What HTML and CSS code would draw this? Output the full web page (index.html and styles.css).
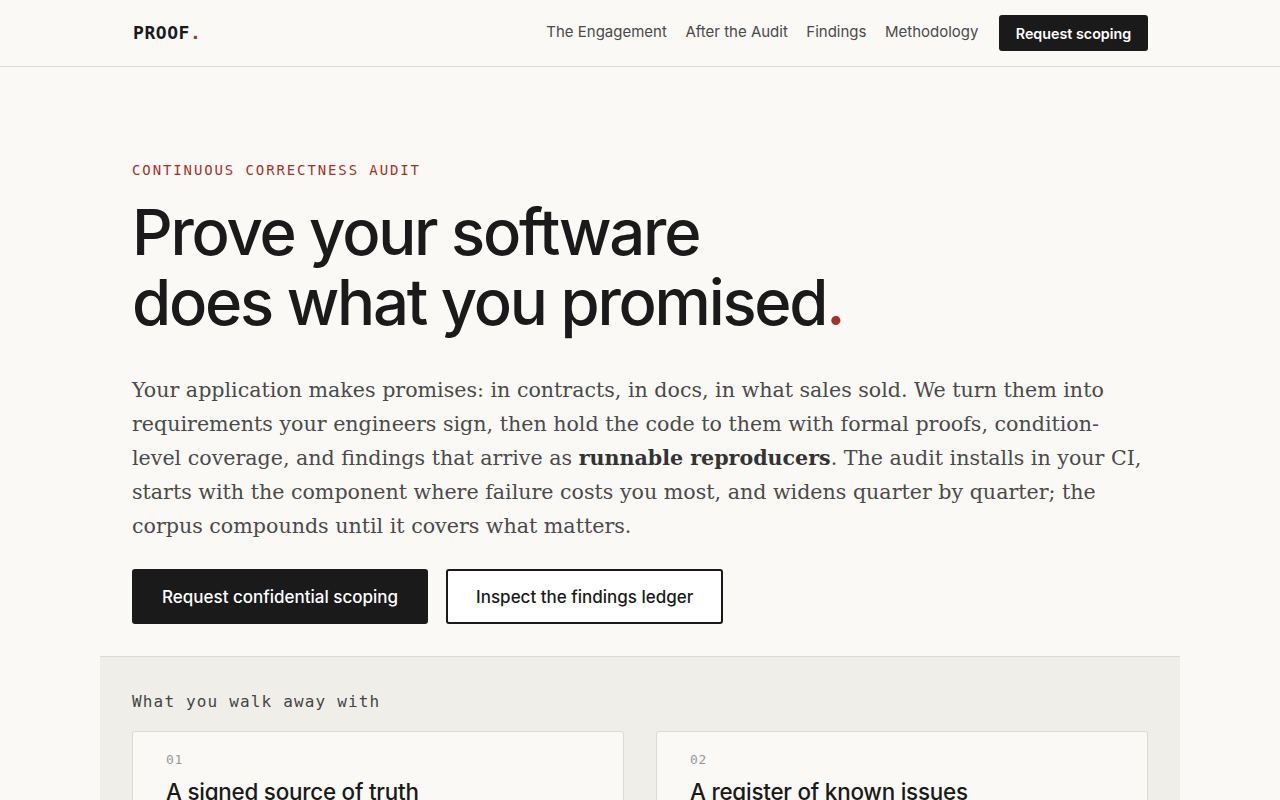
FILE: index.html
```html
<!DOCTYPE html>
<html lang="en">
<head>
<meta charset="utf-8">
<title>PROOF.</title>
<link rel="stylesheet" href="styles.css">
</head>
<body>
<header class="site-header">
  <div class="wrap header-inner">
    <a class="logo" href="#">PROOF<span class="dot">.</span></a>
    <nav class="nav">
      <a class="nav-link" href="#">The Engagement</a>
      <a class="nav-link" href="#">After the Audit</a>
      <a class="nav-link" href="#">Findings</a>
      <a class="nav-link" href="#">Methodology</a>
      <a class="nav-cta" href="#">Request scoping</a>
    </nav>
  </div>
</header>
<main>
  <section class="wrap hero">
    <p class="eyebrow">CONTINUOUS CORRECTNESS AUDIT</p>
    <h1 class="title">Prove your software<br>does what you promised<span class="dot">.</span></h1>
    <p class="lede">Your application makes promises: in contracts, in docs, in what sales sold. We turn them into requirements your engineers sign, then hold the code to them with formal proofs, condition-level coverage, and findings that arrive as <strong>runnable reproducers</strong>. The audit installs in your CI, starts with the component where failure costs you most, and widens quarter by quarter; the corpus compounds until it covers what matters.</p>
    <div class="actions">
      <a class="btn btn-primary" href="#">Request confidential scoping</a>
      <a class="btn btn-outline" href="#">Inspect the findings ledger</a>
    </div>
  </section>
  <section class="wrap deliverables">
    <h2 class="section-label">What you walk away with</h2>
    <div class="cards">
      <article class="card">
        <span class="card-num">01</span>
        <h3 class="card-title">A signed source of truth</h3>
      </article>
      <article class="card">
        <span class="card-num">02</span>
        <h3 class="card-title">A register of known issues</h3>
      </article>
    </div>
  </section>
</main>
</body>
</html>
```
FILE: styles.css
```css
* { box-sizing: border-box; }
html, body { margin: 0; padding: 0; }
body {
  background: #faf9f6;
  color: #1a1a1a;
  font-family: "Inter", "Liberation Sans", sans-serif;
}
a { text-decoration: none; color: inherit; }

.wrap {
  max-width: 1080px;
  margin: 0 auto;
  padding-left: 32px;
  padding-right: 32px;
}

.site-header {
  border-bottom: 1px solid #dcdad5;
}
.header-inner {
  height: 66px;
  display: flex;
  align-items: center;
  justify-content: space-between;
}
.logo {
  font-family: "DejaVu Sans Mono", monospace;
  font-weight: 700;
  font-size: 18px;
  letter-spacing: 0.03em;
  color: #1a1a1a;
  margin-left: 1px;
  margin-bottom: 2px;
}
.dot { color: #a4322a; }
.nav {
  display: flex;
  align-items: center;
  gap: 18.5px;
  font-size: 15px;
  color: #4a4a4a;
}
.nav-link { margin-bottom: 4px; }
.nav-cta {
  margin-left: 2px;
  background: #1a1a1a;
  color: #fff;
  font-weight: 600;
  font-size: 14.3px;
  padding: 0 14px;
  width: 149px;
  justify-content: center;
  height: 36px;
  display: inline-flex;
  align-items: center;
  border-radius: 3px;
}

.hero {
  padding-top: 93px;
  padding-bottom: 32px;
}
.eyebrow {
  margin: 0;
  font-family: "DejaVu Sans Mono", monospace;
  font-size: 14px;
  letter-spacing: 0.135em;
  color: #a4322a;
  line-height: 20px;
}
.title {
  margin: 17px 0 0;
  font-size: 63.4px;
  font-weight: 500;
  letter-spacing: -0.035em;
  line-height: 70px;
  color: #1a1a1a;
}
.lede {
  margin: 36px 0 0;
  font-family: "DejaVu Serif", serif;
  font-size: 20.6px;
  line-height: 34px;
  color: #4a4a4a;
  max-width: 1010px;
}
.lede strong { color: #333; font-weight: 700; }
.actions {
  margin-top: 26px;
  display: flex;
  gap: 18px;
}
.btn {
  display: inline-flex;
  align-items: center;
  height: 55px;
  padding: 0 28px;
  font-size: 17px;
  font-weight: 500;
  border-radius: 3px;
}
.btn-primary { background: #1a1a1a; color: #fff; padding: 0 30px; }
.btn-outline { border: 2px solid #1a1a1a; color: #1a1a1a; background: #fff; }

.deliverables {
  background: #f0eee9;
  border-top: 1px solid #dcdad5;
  padding-top: 33px;
  padding-bottom: 40px;
}
.section-label {
  margin: 0;
  font-family: "DejaVu Sans Mono", monospace;
  font-weight: 400;
  font-size: 16px;
  letter-spacing: 0.073em;
  color: #444;
  line-height: 24px;
}
.cards {
  margin-top: 17px;
  display: grid;
  grid-template-columns: 1fr 1fr;
  gap: 32px;
}
.card {
  background: #faf9f6;
  border: 1px solid #dcdad5;
  border-radius: 3px;
  padding: 20px 33px 28px;
  min-height: 200px;
}
.card-num {
  display: block;
  font-family: "DejaVu Sans Mono", monospace;
  font-size: 13px;
  color: #999;
  letter-spacing: 0.06em;
  line-height: 16px;
}
.card-title {
  margin: 10px 0 0;
  font-size: 22.4px;
  font-weight: 500;
  letter-spacing: -0.01em;
  line-height: 28px;
}
```
